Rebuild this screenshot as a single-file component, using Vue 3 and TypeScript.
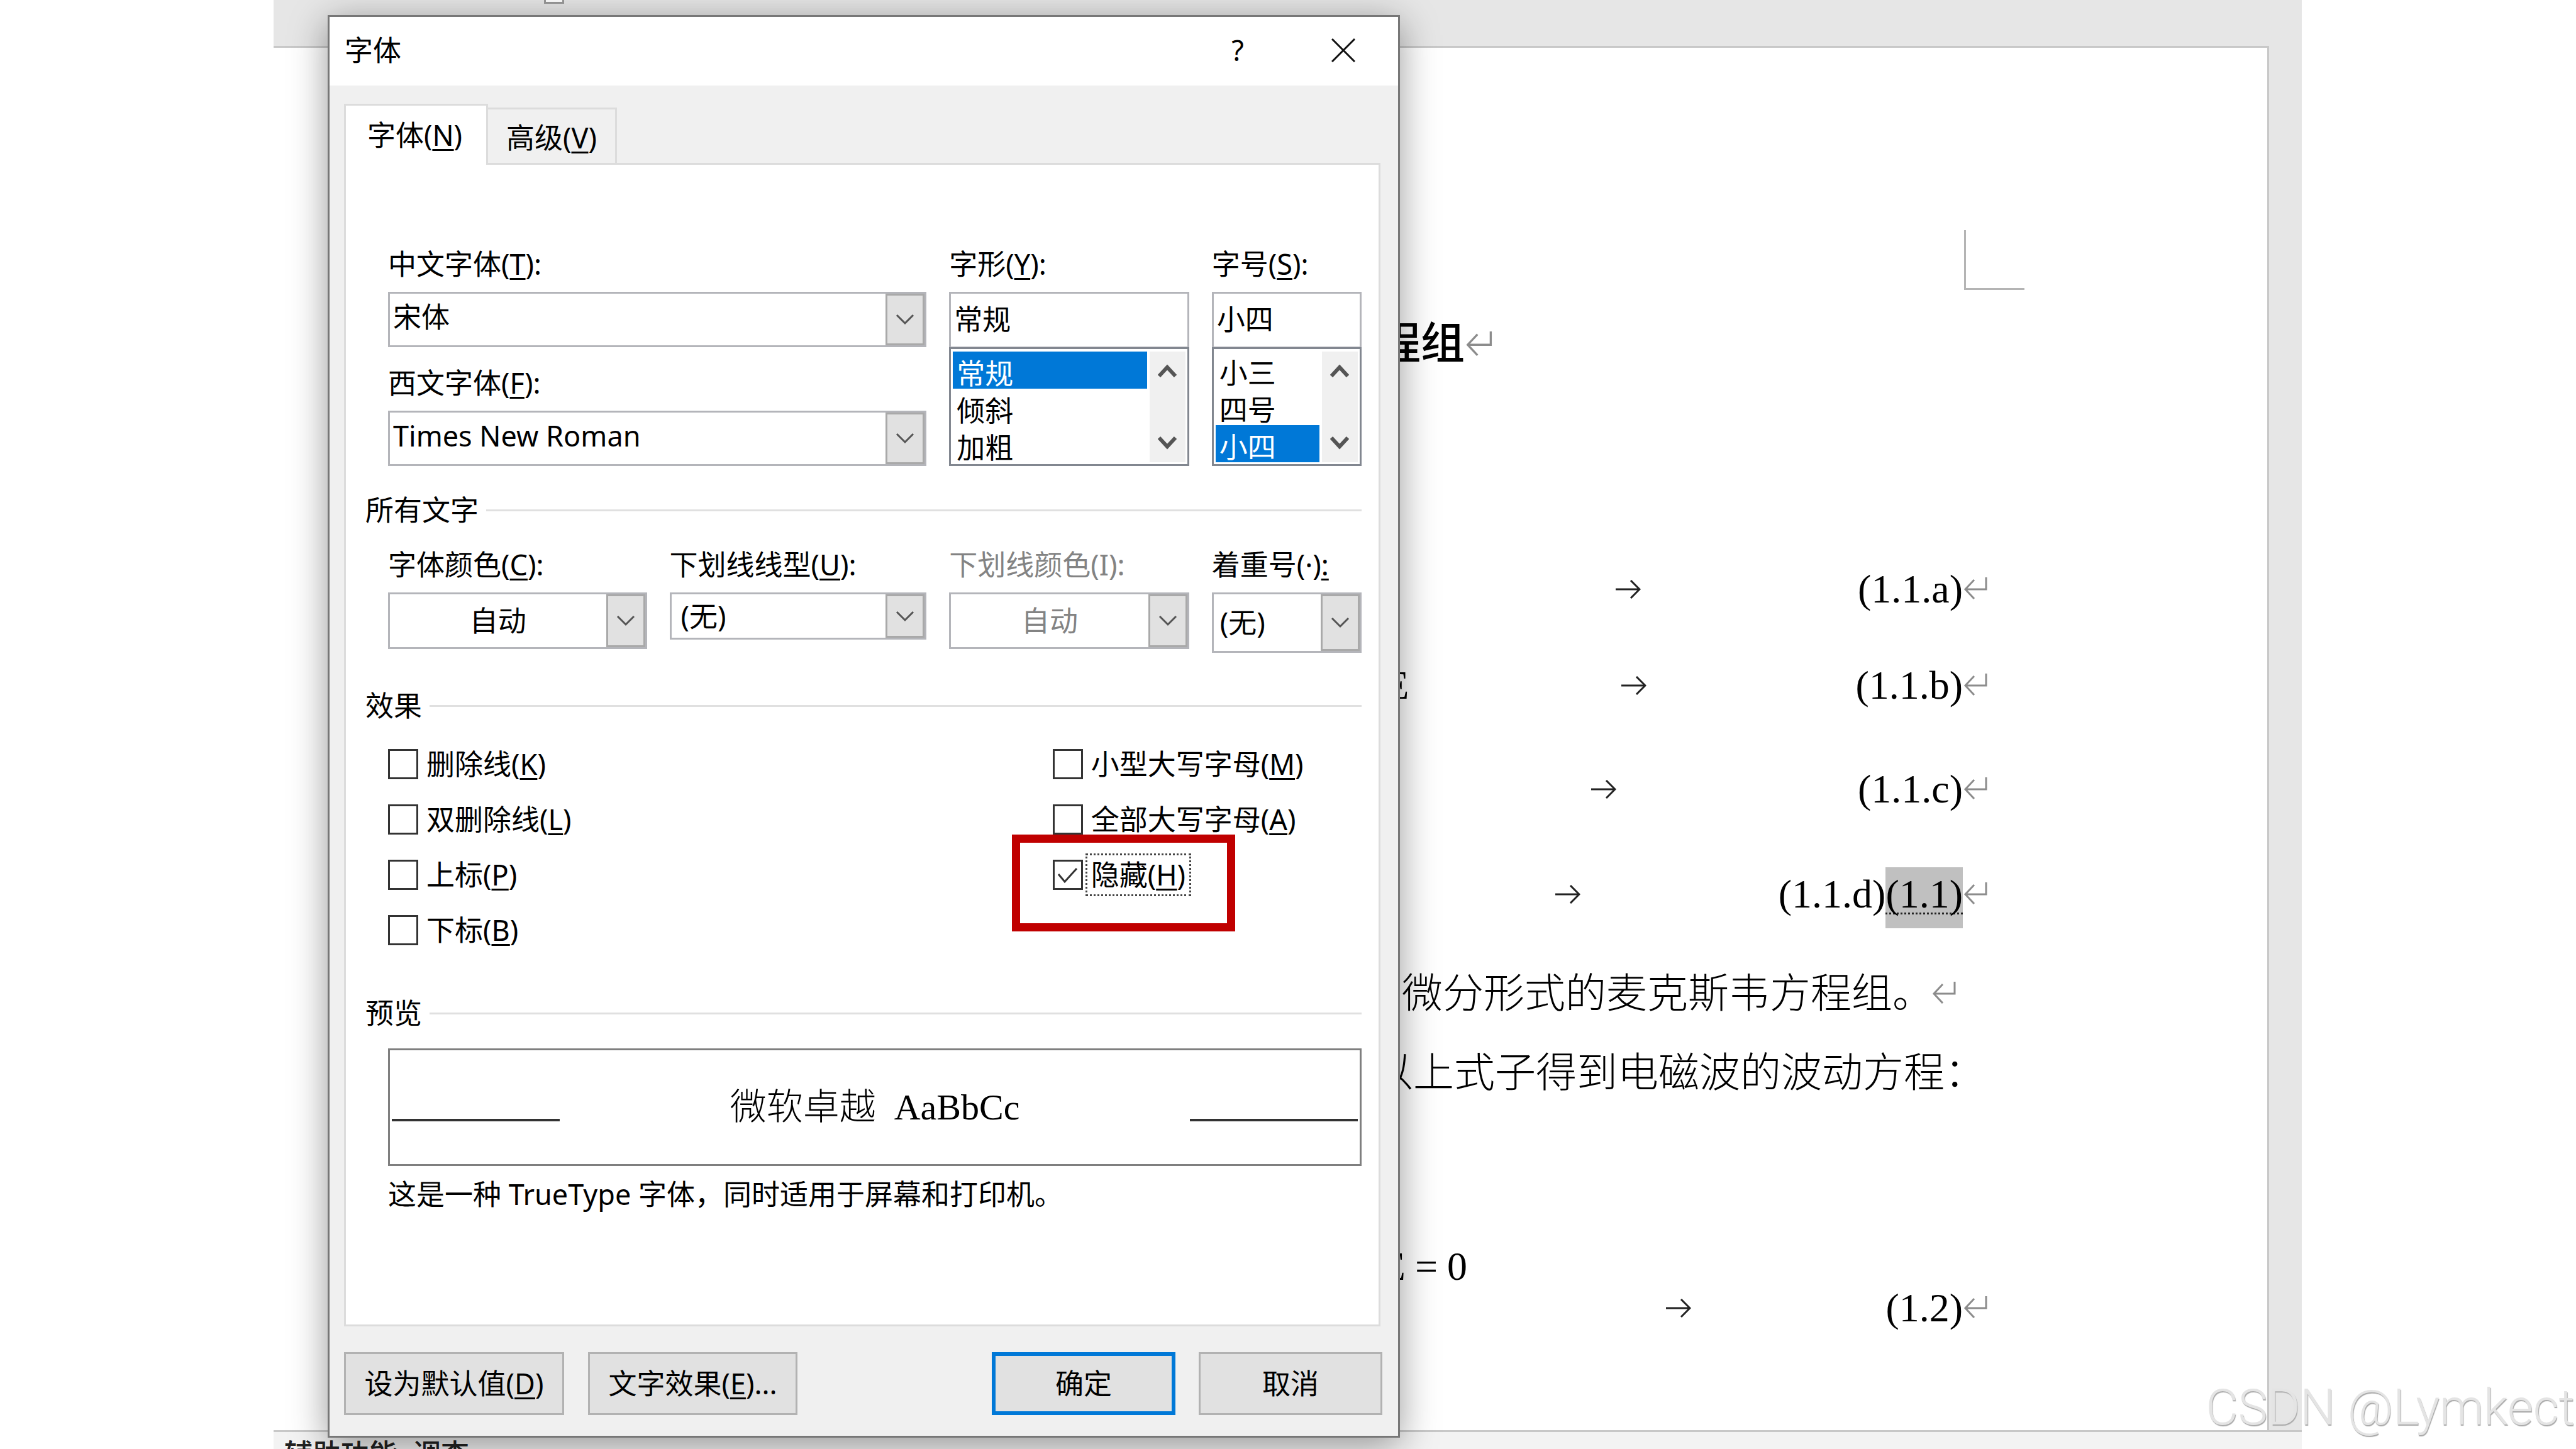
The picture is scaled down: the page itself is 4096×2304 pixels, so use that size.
<script setup lang="ts">
import { ref } from 'vue'

interface EquationRow {
  text: string
  tab: number
  selected?: string
}

interface Effect {
  id: string
  label: string
  key: string
  checked: boolean
  focused?: boolean
}

const equations: EquationRow[] = [
  { text: '(1.1.a)', tab: 345 },
  { text: '(1.1.b)', tab: 332 },
  { text: '(1.1.c)', tab: 384 },
  { text: '(1.1.d)', tab: 315, selected: '(1.1)' },
]

const leftEffects = ref<Effect[]>([
  { id: 'strike', label: '删除线', key: 'K', checked: false },
  { id: 'double-strike', label: '双删除线', key: 'L', checked: false },
  { id: 'superscript', label: '上标', key: 'P', checked: false },
  { id: 'subscript', label: '下标', key: 'B', checked: false },
])

const rightEffects = ref<Effect[]>([
  { id: 'small-caps', label: '小型大写字母', key: 'M', checked: false },
  { id: 'all-caps', label: '全部大写字母', key: 'A', checked: false },
  { id: 'hidden-text', label: '隐藏', key: 'H', checked: true, focused: true },
])

const effectColumns = [leftEffects, rightEffects]

const styleName = ref('常规')
const sizeName = ref('小四')
const styles = ['常规', '倾斜', '加粗']
const sizes = ['小三', '四号', '小四']
</script>

<template>
  <main class="screen">
    <svg class="defs" width="0" height="0" aria-hidden="true">
      <symbol id="return" viewBox="0 0 38 36">
        <path d="M36 1V20H3M17 5L3 20L17 35" fill="none" stroke="#8c8c8c" stroke-width="3" />
      </symbol>
      <symbol id="tab" viewBox="0 0 40 30">
        <path d="M0 15H37M24 1L38 15L24 29" fill="none" stroke="#222" stroke-width="3" />
      </symbol>
      <symbol id="drop" viewBox="0 0 30 18">
        <path d="M2 2L15 15L28 2" fill="none" stroke="#555" stroke-width="3" />
      </symbol>
      <symbol id="down" viewBox="0 0 30 22">
        <path d="M2 3L15 17L28 3" fill="none" stroke="#555" stroke-width="6" />
      </symbol>
      <symbol id="up" viewBox="0 0 30 22">
        <path d="M2 19L15 5L28 19" fill="none" stroke="#555" stroke-width="6" />
      </symbol>
    </svg>

    <section class="workspace">
      <div class="ruler"><span class="ruler-marker"></span></div>
      <div class="canvas">
        <article class="paper">
          <div class="crop-mark"></div>
          <h1 class="line heading">方程组<svg class="mark heading-mark"><use href="#return" /></svg></h1>
          <p v-for="(row, i) in equations" :key="row.text" class="line equation" :class="'eq-' + i">
            <span v-if="i === 1" class="operand">E</span>
            <svg class="tab-mark" :style="{ marginRight: row.tab + 'px' }"><use href="#tab" /></svg>
            <span>{{ row.text }}</span>
            <span v-if="row.selected" class="selected-text"><span>{{ row.selected }}</span></span>
            <svg class="mark"><use href="#return" /></svg>
          </p>
          <p class="line prose first">微分形式的麦克斯韦方程组。<svg class="mark flush"><use href="#return" /></svg></p>
          <p class="line prose second">以上式子得到电磁波的波动方程：</p>
          <p class="line wave"><span>E</span><span>=</span><span>0</span></p>
          <p class="line equation last">
            <svg class="tab-mark" :style="{ marginRight: '309px' }"><use href="#tab" /></svg>
            <span>(1.2)</span>
            <svg class="mark"><use href="#return" /></svg>
          </p>
        </article>
      </div>
      <footer class="status">辅助功能: 调查</footer>
    </section>

    <form class="dialog" role="dialog" aria-labelledby="dialog-title" @submit.prevent>
      <header class="title-bar">
        <h2 id="dialog-title">字体</h2>
        <button type="button" class="title-button" aria-label="帮助">?</button>
        <button type="button" class="title-button close" aria-label="关闭">
          <svg viewBox="0 0 38 38" width="38" height="38">
            <path d="M1 1L37 37M37 1L1 37" stroke="#111" stroke-width="3" />
          </svg>
        </button>
      </header>

      <div class="dialog-body">
        <nav class="tabs" role="tablist">
          <button type="button" role="tab" aria-selected="true" class="tab active">字体(<u>N</u>)</button>
          <button type="button" role="tab" aria-selected="false" class="tab">高级(<u>V</u>)</button>
        </nav>

        <div class="panel">
          <div class="font-grid">
            <div class="stack">
              <div class="field">
                <label for="cjk-font">中文字体(<u>T</u>):</label>
                <div class="combo">
                  <select id="cjk-font"><option>宋体</option></select>
                  <span class="arrow"><svg><use href="#drop" /></svg></span>
                </div>
              </div>
              <div class="field">
                <label for="latin-font">西文字体(<u>F</u>):</label>
                <div class="combo">
                  <select id="latin-font"><option>Times New Roman</option></select>
                  <span class="arrow"><svg><use href="#drop" /></svg></span>
                </div>
              </div>
            </div>
            <div class="field">
              <label for="style-name">字形(<u>Y</u>):</label>
              <input id="style-name" v-model="styleName" type="text" class="text-box" />
              <div class="list">
                <select v-model="styleName" size="3" aria-label="字形">
                  <option v-for="s in styles" :key="s" :value="s">{{ s }}</option>
                </select>
                <span class="scroll"><svg><use href="#up" /></svg><svg><use href="#down" /></svg></span>
              </div>
            </div>
            <div class="field">
              <label for="size-name">字号(<u>S</u>):</label>
              <input id="size-name" v-model="sizeName" type="text" class="text-box" />
              <div class="list">
                <select v-model="sizeName" size="3" aria-label="字号">
                  <option v-for="s in sizes" :key="s" :value="s">{{ s }}</option>
                </select>
                <span class="scroll"><svg><use href="#up" /></svg><svg><use href="#down" /></svg></span>
              </div>
            </div>
          </div>

          <h3 class="section all-text">所有文字</h3>
          <div class="color-grid">
            <div class="field">
              <label for="font-color">字体颜色(<u>C</u>):</label>
              <div class="combo medium">
                <select id="font-color" class="centered"><option>自动</option></select>
                <span class="arrow"><svg><use href="#drop" /></svg></span>
              </div>
            </div>
            <div class="field">
              <label for="underline-style">下划线线型(<u>U</u>):</label>
              <div class="combo short">
                <select id="underline-style" class="indented"><option>(无)</option></select>
                <span class="arrow"><svg><use href="#drop" /></svg></span>
              </div>
            </div>
            <div class="field">
              <label for="underline-color" class="muted">下划线颜色(I):</label>
              <div class="combo medium">
                <select id="underline-color" class="centered" disabled><option>自动</option></select>
                <span class="arrow"><svg><use href="#drop" /></svg></span>
              </div>
            </div>
            <div class="field">
              <label for="emphasis">着重号(·)<u>:</u></label>
              <div class="combo tall">
                <select id="emphasis" class="tight"><option>(无)</option></select>
                <span class="arrow"><svg><use href="#drop" /></svg></span>
              </div>
            </div>
          </div>

          <h3 class="section effects-title">效果</h3>
          <div class="effects">
            <div v-for="(column, c) in effectColumns" :key="c" class="effect-column">
              <label v-for="e in column.value" :key="e.id" class="effect" :for="e.id">
                <span class="tick">
                  <input :id="e.id" v-model="e.checked" type="checkbox" />
                  <svg v-if="e.checked" viewBox="0 0 48 48">
                    <path d="M9 23L19 35L38 14" fill="none" stroke="#333" stroke-width="3" />
                  </svg>
                </span>
                <span class="effect-text" :class="{ focused: e.focused }">{{ e.label }}(<u>{{ e.key }}</u>)</span>
                <span v-if="e.focused" class="callout"></span>
              </label>
            </div>
          </div>

          <h3 class="section preview-title">预览</h3>
          <div class="preview">
            <span class="rule"></span>
            <span class="sample">微软卓越&nbsp; AaBbCc</span>
            <span class="rule"></span>
          </div>
          <p class="note">这是一种 TrueType 字体，同时适用于屏幕和打印机。</p>
        </div>

        <div class="actions">
          <button type="button" class="action default-btn">设为默认值(<u>D</u>)</button>
          <button type="button" class="action effect-btn">文字效果(<u>E</u>)...</button>
          <button type="submit" class="action wide primary">确定</button>
          <button type="button" class="action wide">取消</button>
        </div>
      </div>
    </form>

    <div class="watermark">CSDN @Lymkect</div>
  </main>
</template>

<style>
body {
  margin: 0;
  background: #fff;
}
</style>

<style scoped>
* {
  box-sizing: border-box;
}

.screen {
  position: relative;
  height: 100vh;
  overflow: hidden;
  background: #fff;
  color: #000;
  font-family: "Noto Sans", "Noto Sans CJK SC", sans-serif;
  font-size: 45px;
  line-height: 60px;
}

.defs {
  position: absolute;
}

h1, h2, h3, p {
  margin: 0;
  font-size: inherit;
  font-weight: 400;
}

u {
  text-decoration-thickness: 3px;
  text-underline-offset: 5px;
  text-decoration-skip-ink: none;
}

button, select, input {
  margin: 0;
  padding: 0;
  border: 0;
  border-radius: 0;
  color: inherit;
  font: inherit;
}

/* document window */
.workspace {
  display: flex;
  flex-direction: column;
  height: 100%;
  margin: 0 436px 0 435px;
  background: #e6e6e6;
}

.ruler {
  flex: 0 0 73px;
  padding-left: 430px;
}

.ruler-marker {
  display: block;
  width: 32px;
  height: 6px;
  border: 3px solid #999;
  border-top: 0;
  background: #fff;
}

.canvas {
  flex: 1;
  display: flex;
  min-height: 0;
  padding-right: 52px;
}

.paper {
  flex: 1;
  overflow: hidden;
  border: 3px solid #c8c8c8;
  border-width: 3px 3px 0 0;
  background: #fff;
  font-family: "Liberation Serif", "Noto Sans CJK SC", serif;
  font-size: 64px;
}

.crop-mark {
  width: 96px;
  height: 95px;
  margin: 290px 386px 0 auto;
  border: 3px solid #b4b4b4;
  border-width: 0 0 3px 3px;
}

.line {
  display: flex;
  justify-content: flex-end;
  padding-right: 445px;
  line-height: 72px;
  white-space: nowrap;
}

.mark {
  width: 38px;
  height: 36px;
  margin: 16px 0 0 1px;
}

.heading {
  margin-top: 51px;
  padding-right: 1231px;
  font-size: 70px;
  font-weight: 500;
}

.heading-mark {
  width: 45px;
  height: 40px;
  margin: 14px 0 0;
}

.tab-mark {
  width: 40px;
  height: 30px;
  margin-top: 21px;
}

.operand {
  margin-right: 338px;
}

.eq-0 { margin-top: 317px; }
.eq-1 { margin-top: 81px; }
.eq-2 { margin-top: 93px; }
.eq-3 { margin-top: 95px; }

.selected-text {
  height: 97px;
  margin: -7px 0 -18px;
  padding-top: 7px;
  background: #c0c0c0;
}

.selected-text span {
  display: block;
  height: 68px;
  border-bottom: 3px dotted #222;
}

.prose {
  font-size: 65px;
  font-weight: 300;
}

.first {
  margin-top: 86px;
  padding-right: 495px;
}

.second {
  margin-top: 54px;
  padding-right: 448px;
}

.flush {
  margin-left: -2px;
}

.wave {
  gap: 15px;
  margin-top: 242px;
  padding-right: 1272px;
  line-height: 60px;
}

.last {
  margin-top: 0;
}

.status {
  flex: 0 0 30px;
  overflow: hidden;
  padding-left: 17px;
  border-top: 3px solid #c8c8c8;
  background: #f3f3f3;
  color: #222;
  font-weight: 500;
  line-height: 70px;
}

/* font dialog */
.dialog {
  position: absolute;
  top: 24px;
  left: 521px;
  width: 1705px;
  border: 3px solid #777;
  background: #f0f0f0;
  box-shadow: 0 12px 56px rgba(0, 0, 0, 0.4);
}

.title-bar {
  display: flex;
  align-items: center;
  height: 109px;
  padding: 0 68px 4px 24px;
  background: #fff;
}

.title-bar h2 {
  flex: 1;
}

.title-button {
  width: 38px;
  background: none;
}

.close {
  display: flex;
  margin-left: 130px;
}

.dialog-body {
  padding: 29px 25px 33px 23px;
}

.tabs {
  display: flex;
  align-items: flex-end;
}

.tab {
  width: 205px;
  height: 88px;
  padding: 4px 0 0;
  border: 3px solid #dcdcdc;
  border-width: 3px 3px 0 0;
  background: #f0f0f0;
}

.tab.active {
  position: relative;
  width: 229px;
  height: 97px;
  margin-bottom: -3px;
  padding: 0 4px 0 0;
  border-left-width: 3px;
  background: #fff;
}

.panel {
  margin-right: 3px;
  padding: 130px 27px 177px 31px;
  border: 3px solid #dcdcdc;
  background: #fff;
}

.font-grid, .color-grid, .effects, .preview, .note {
  margin-left: 36px;
}

.font-grid {
  display: grid;
  grid-template-columns: 855fr 381fr 238fr;
  gap: 36px;
}

.stack {
  display: flex;
  flex-direction: column;
  gap: 29px;
}

.field {
  display: flex;
  flex-direction: column;
  min-width: 0;
}

.field label {
  margin-bottom: 16px;
  line-height: 56px;
  white-space: nowrap;
}

.combo {
  display: flex;
  height: 88px;
  border: 3px solid #b4b5ba;
  background: #fff;
}

.combo.short { height: 75px; }
.combo.medium { height: 90px; }
.combo.tall { height: 96px; }

.combo select {
  flex: 1;
  min-width: 0;
  padding: 0 5px 8px;
  appearance: none;
  background: none;
  opacity: 1;
}

.combo .centered {
  padding: 0;
  text-align: center;
  text-align-last: center;
}

.combo .indented {
  padding: 0 0 0 15px;
}

.combo .tight {
  padding: 0 0 0 10px;
}

.combo select:disabled, .muted {
  color: #838383;
}

.arrow {
  display: flex;
  align-items: center;
  justify-content: center;
  width: 62px;
  border: 3px solid #a9a9a9;
  background: #e1e1e1;
}

.arrow svg {
  width: 30px;
  height: 18px;
}

.text-box {
  width: 100%;
  height: 88px;
  padding: 0 5px 8px;
  border: 3px solid #b4b5ba;
  border-bottom-width: 1px;
  background: #fff;
}

.list {
  display: flex;
  height: 189px;
  padding: 4px 3px 3px;
  border: 3px solid #828790;
  background: #fff;
}

.list select {
  flex: 1;
  min-width: 0;
  height: 176px;
  overflow: hidden;
  appearance: none;
  background: none;
  outline: 0;
}

.list option {
  height: 59px;
  min-height: 59px;
  padding: 0 6px;
  line-height: 55px;
}

.list option:checked {
  background: linear-gradient(#0078d7, #0078d7);
  color: #fff;
  -webkit-text-fill-color: #fff;
}

.scroll {
  display: flex;
  flex-direction: column;
  align-items: center;
  justify-content: space-between;
  width: 57px;
  margin-left: 4px;
  padding: 20px 0;
  background: #f0f0f0;
}

.scroll svg {
  width: 30px;
  height: 22px;
}

.section {
  display: flex;
  align-items: center;
  gap: 12px;
}

.section::after {
  content: "";
  flex: 1;
  height: 3px;
  background: #e0e0e0;
}

.all-text { margin: 40px 0 29px; }
.effects-title { margin: 54px 0 33px; }
.preview-title { margin: 72px 0 26px; }

.color-grid {
  display: grid;
  grid-template-columns: 411fr 408fr 381fr 238fr;
  align-items: start;
  gap: 36px;
}

.effects {
  display: grid;
  grid-template-columns: 1056fr 491fr;
}

.effect-column {
  display: flex;
  flex-direction: column;
  align-items: flex-start;
  gap: 28px;
}

.effect {
  position: relative;
  display: flex;
  align-items: center;
  gap: 8px;
  height: 60px;
  white-space: nowrap;
}

.tick {
  position: relative;
  display: flex;
}

.tick input {
  width: 48px;
  height: 48px;
  appearance: none;
  border: 3px solid #333;
  background: #fff;
}

.tick svg {
  position: absolute;
  inset: 0;
  pointer-events: none;
}

.effect-text {
  padding: 0 5px;
}

.focused {
  outline: 3px dotted #444;
  outline-offset: 1px;
}

.callout {
  position: absolute;
  top: -34px;
  left: -65px;
  width: 355px;
  height: 154px;
  border: 13px solid #c00000;
}

.preview {
  display: flex;
  align-items: flex-end;
  justify-content: space-between;
  height: 187px;
  padding: 0 3px 58px;
  border: 3px solid #7f7f7f;
}

.rule {
  width: 267px;
  height: 4px;
  margin-bottom: 10px;
  background: #333;
}

.sample {
  font-family: "Liberation Serif", "Noto Sans CJK SC", serif;
  font-size: 58px;
  font-weight: 300;
  line-height: 64px;
}

.note {
  margin-top: 15px;
}

.actions {
  display: flex;
  margin-top: 41px;
}

.action {
  height: 100px;
  border: 3px solid #b2b2b2;
  background: #e1e1e1;
}

.default-btn {
  width: 350px;
}

.effect-btn {
  width: 333px;
  margin: 0 auto 0 38px;
}

.wide {
  width: 292px;
}

.primary {
  margin-right: 37px;
  border: 6px solid #0078d7;
}

.watermark {
  position: absolute;
  right: 2px;
  bottom: 20px;
  color: #e4e4e4;
  font-family: Roboto, sans-serif;
  font-size: 79px;
  font-weight: 300;
  line-height: 92px;
  text-shadow: 1px 2px 1px #aaa;
}
</style>
